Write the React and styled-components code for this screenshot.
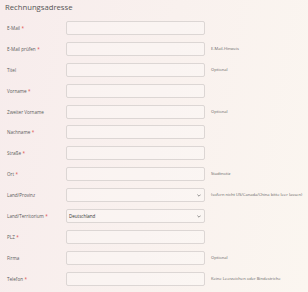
import React from "react";
import styled, { createGlobalStyle } from "styled-components";

const Global = createGlobalStyle`
  html, body { margin: 0; padding: 0; }
  body {
    width: 308px;
    height: 292px;
    overflow: hidden;
    background: linear-gradient(100deg, #f7ecec 0%, #f9f1ee 50%, #fbf6f0 100%);
    font-family: "Open Sans", "Noto Sans", sans-serif;
  }
`;

const Page = styled.div`
  padding: 2px 0 0 5px;
`;

const Title = styled.h2`
  margin: 0 0 7.5px 0;
  font-size: 7.7px;
  line-height: 11.5px;
  font-weight: 400;
  color: #555;
`;

const Form = styled.div`
  display: grid;
  grid-template-columns: 53px 139px auto;
  column-gap: 6px;
  row-gap: 6.9px;
  align-items: center;
  padding-left: 2px;
`;

const Label = styled.label`
  font-size: 4.6px;
  line-height: 6px;
  color: #5a5a5a;
  white-space: nowrap;
`;

const Req = styled.span`
  color: #e04b4b;
  margin-left: 1.5px;
`;

const Input = styled.div`
  box-sizing: border-box;
  height: 14px;
  border: 1px solid #dcd6d4;
  border-radius: 2px;
  background: rgba(255, 255, 255, 0.25);
  position: relative;
  display: flex;
  align-items: center;
  padding-left: 2px;
  font-size: 4.5px;
  color: #333;
`;

const Chevron = styled.svg`
  position: absolute;
  right: 3px;
  top: 5px;
  width: 4px;
  height: 3px;
`;

const Hint = styled.span`
  font-size: 4.1px;
  line-height: 6px;
  color: #666;
  white-space: nowrap;
`;

const rows = [
  { label: "E-Mail", req: true },
  { label: "E-Mail prüfen", req: true, hint: "E-Mail-Hinweis" },
  { label: "Titel", hint: "Optional" },
  { label: "Vorname", req: true },
  { label: "Zweiter Vorname", hint: "Optional" },
  { label: "Nachname", req: true },
  { label: "Straße", req: true },
  { label: "Ort", req: true, hint: "Stadtnotiz" },
  { label: "Land/Provinz", select: true, hint: "(sofern nicht US/Canada/China bitte leer lassen)" },
  { label: "Land/Territorium", req: true, select: true, value: "Deutschland" },
  { label: "PLZ", req: true },
  { label: "Firma", hint: "Optional" },
  { label: "Telefon", req: true, hint: "Keine Leerzeichen oder Bindestriche" },
];

export default function App() {
  return (
    <>
      <Global />
      <Page>
        <Title>Rechnungsadresse</Title>
        <Form>
          {rows.map((r) => (
            <React.Fragment key={r.label}>
              <Label>
                {r.label}
                {r.req && <Req>*</Req>}
              </Label>
              <Input>
                {r.value}
                {r.select && (
                  <Chevron viewBox="0 0 4 3">
                    <path d="M0.4 0.6 L2 2.2 L3.6 0.6" fill="none" stroke="#666" strokeWidth="0.7" />
                  </Chevron>
                )}
              </Input>
              <Hint>{r.hint}</Hint>
            </React.Fragment>
          ))}
        </Form>
      </Page>
    </>
  );
}
